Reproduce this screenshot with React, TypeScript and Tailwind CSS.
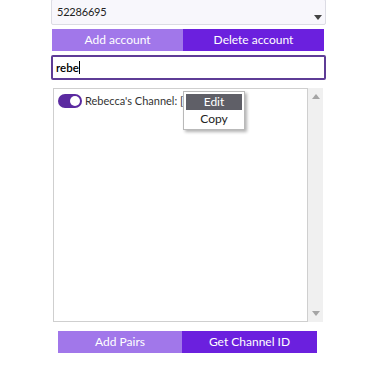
import React from "react";

const font = { fontFamily: 'Lato, "Open Sans", sans-serif' };

function Toggle() {
  return (
    <div className="relative w-[24px] h-[14px] rounded-full bg-[#5b2aa0] shrink-0">
      <div className="absolute right-[2px] top-[2px] w-[10px] h-[10px] rounded-full bg-white" />
    </div>
  );
}

export default function App() {
  return (
    <div className="relative w-[375px] h-[366px] bg-white overflow-hidden text-[11px] text-[#222]" style={font}>
      {/* account select */}
      <div className="ml-[51px] -mt-[1px] w-[275px] h-[26px] border border-[#dcdce4] bg-[#f8f7fc] rounded-[2px] flex items-center justify-between pl-[5px] pr-[3px]">
        <span className="tracking-[-0.2px]">52286695</span>
        <svg width="8" height="5" viewBox="0 0 8 5" className="mt-[10px]">
          <path d="M0 0h8L4 5z" fill="#444" />
        </svg>
      </div>

      <div className="ml-[52px] mt-[4px] w-[272px] h-[22px] flex text-white text-[12px]">
        <button className="w-[131px] bg-[#a177ea] flex items-center justify-center">Add account</button>
        <button className="flex-1 bg-[#6b20de] flex items-center justify-center">Delete account</button>
      </div>

      <div className="ml-[51px] mt-[4px] w-[275px] h-[25px] border-2 border-[#5e3c96] rounded-[2px] flex items-center pl-[3px] text-[11.5px] font-semibold text-black">
        <span>rebe</span>
        <span className="w-px h-[13px] bg-black" />
      </div>

      <div className="ml-[53px] mt-[8px] w-[270px] h-[234px] flex">
        <div className="flex-1 border border-[#cfcfcf] bg-white pt-[4px] pl-[4px]">
          <div className="flex items-center gap-[3px] text-[11px] text-[#333]">
            <Toggle />
            <span>Rebecca's Channel: [</span>
          </div>
        </div>
        <div className="w-[15px] bg-[#f0f0f0] flex flex-col items-center justify-between py-[6px]">
          <svg width="8" height="5" viewBox="0 0 8 5">
            <path d="M4 0L8 5H0z" fill="#a5a5a5" />
          </svg>
          <svg width="8" height="5" viewBox="0 0 8 5">
            <path d="M0 0h8L4 5z" fill="#a5a5a5" />
          </svg>
        </div>
      </div>

      <div className="ml-[58px] mt-[9px] w-[259px] h-[22px] flex text-white text-[12px]">
        <button className="w-[124px] bg-[#a177ea] flex items-center justify-center">Add Pairs</button>
        <button className="flex-1 bg-[#6b20de] flex items-center justify-center">Get Channel ID</button>
      </div>

      {/* context menu */}
      <div className="absolute left-[183px] top-[91px] w-[62px] h-[39px] bg-white border border-[#b9b9b9] shadow-[2px_2px_3px_rgba(0,0,0,0.3)] p-[2px] text-[12px]">
        <div className="h-[16px] bg-[#5f5f67] text-white flex items-center justify-center">Edit</div>
        <div className="h-[17px] flex items-center justify-center text-[#222]">Copy</div>
      </div>
    </div>
  );
}
